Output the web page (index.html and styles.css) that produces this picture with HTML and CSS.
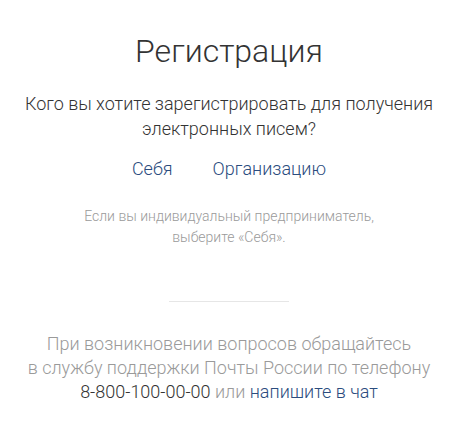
FILE: index.html
```html
<!DOCTYPE html>
<html lang="ru">
<head>
<meta charset="utf-8">
<title>Регистрация</title>
<link rel="stylesheet" href="styles.css">
</head>
<body>
<main class="page">
  <h1 class="title">Регистрация</h1>
  <p class="question">Кого вы хотите зарегистрировать для получения<br>электронных писем?</p>
  <div class="choices">
    <a class="link" href="#">Себя</a>
    <a class="link" href="#">Организацию</a>
  </div>
  <p class="hint">Если вы индивидуальный предприниматель,<br>выберите «Себя».</p>
  <hr class="divider">
  <p class="support">При возникновении вопросов обращайтесь<br>в службу поддержки Почты России по телефону<br><span class="phone">8-800-100-00-00</span> или <a class="link" href="#">напишите в чат</a></p>
</main>
</body>
</html>
```

FILE: styles.css
```css
html, body {
  margin: 0;
  padding: 0;
  background: #ffffff;
}
body {
  font-family: Roboto, "Noto Sans", Arial, sans-serif;
  font-weight: 300;
  color: #333333;
}
.page {
  width: 458px;
  display: flex;
  flex-direction: column;
  align-items: center;
  text-align: center;
  padding-top: 31px;
}
.title {
  margin: 0;
  font-size: 32px;
  line-height: 40px;
  font-weight: 300;
  color: #333333;
}
.question {
  margin: 20px 0 0;
  font-size: 18px;
  line-height: 25px;
  color: #333333;
}
.choices {
  margin-top: 15px;
  display: flex;
  gap: 40px;
  font-size: 18px;
  line-height: 25px;
}
.link {
  color: #2b4c7e;
  text-decoration: none;
}
.hint {
  margin: 25px 0 0;
  font-size: 14px;
  line-height: 21px;
  color: #9a9a9a;
}
.divider {
  margin: 53px 0 0;
  width: 120px;
  height: 1px;
  border: 0;
  background: #e6e6e6;
}
.support {
  margin: 30px 0 0;
  font-size: 18px;
  line-height: 24px;
  color: #9a9a9a;
}
.phone {
  color: #333333;
}
```
